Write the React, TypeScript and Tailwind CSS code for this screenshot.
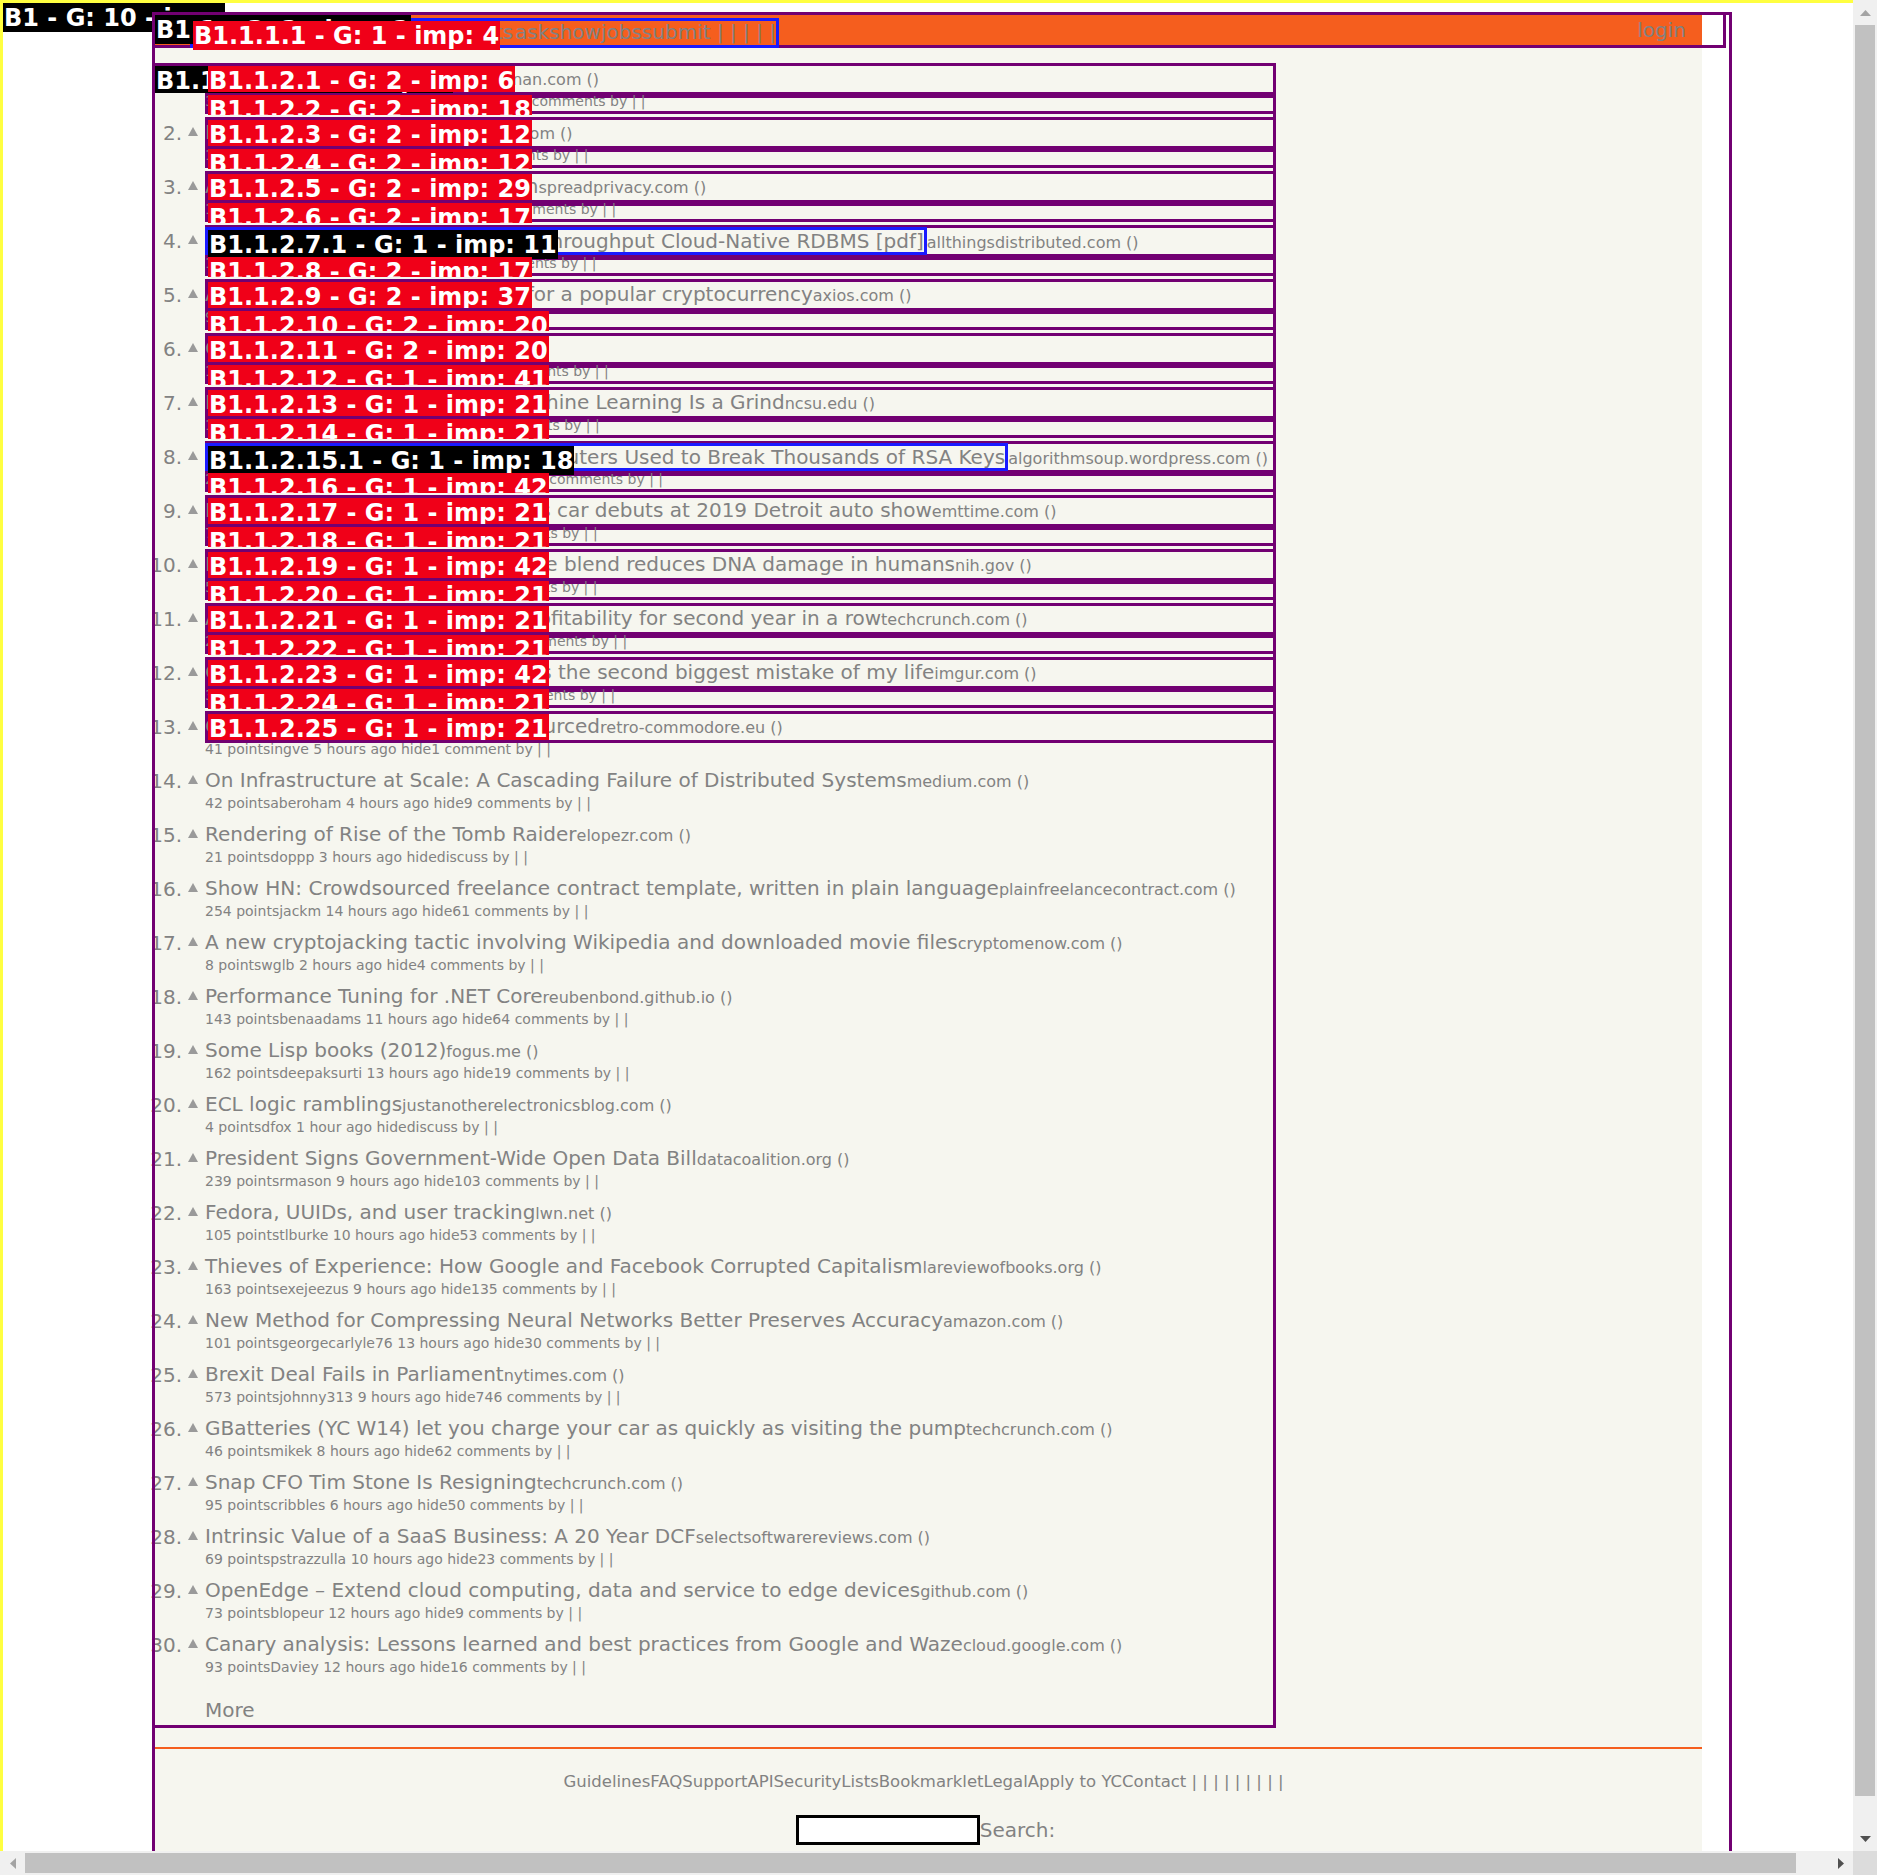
import React from 'react';

type Story = [string, string, string];

const stories: Story[] = [
  ['The Rise of Worse Is Better', 'brennan.com', '361 pointsclumsysmurf 12 hours ago hide106 comments by | |'],
  ['Rust 2019: Think Bigger', 'cameron.com', '112 pointsjseliger 7 hours ago hide45 comments by | |'],
  ['Assessing Google Personalization', 'spreadprivacy.com', '187 pointsmpweiher 10 hours ago hide67 comments by | |'],
  ['Amazon Aurora: Built for a Huge Throughput Cloud-Native RDBMS [pdf]', 'allthingsdistributed.com', '136 pointsrbanffy 11 hours ago hide38 comments by | |'],
  ['A 51% attack is now under way for a popular cryptocurrency', 'axios.com', '9 pointsdnetesn 1 hour ago hidediscuss by | |'],
  ['Curl 7.63.0 released', 'haxx.se', '104 pointspseudolus 8 hours ago hide27 comments by | |'],
  ['Most of the Everyday Work in Machine Learning Is a Grind', 'ncsu.edu', '150 pointsjonbaer 14 hours ago hide71 comments by | |'],
  ['The Simple Maths Behind the Computers Used to Break Thousands of RSA Keys', 'algorithmsoup.wordpress.com', '213 pointsbryanrasmussen 15 hours ago hide88 comments by | |'],
  ['Hydrogen-powered, electric sports car debuts at 2019 Detroit auto show', 'emttime.com', '76 pointswalterbell 6 hours ago hide29 comments by | |'],
  ['Fruit & vegetable juice concentrate blend reduces DNA damage in humans', 'nih.gov', '58 pointspmoriarty 9 hours ago hide31 comments by | |'],
  ['Airbnb reported it has reached profitability for second year in a row', 'techcrunch.com', '248 pointsgorpomon 16 hours ago hide134 comments by | |'],
  ['Quitting my job with Microsoft was the second biggest mistake of my life', 'imgur.com', '341 pointshardmaru 11 hours ago hide97 comments by | |'],
  ['Commodore 64 BASIC V2 open sourced', 'retro-commodore.eu', '41 pointsingve 5 hours ago hide1 comment by | |'],
  ['On Infrastructure at Scale: A Cascading Failure of Distributed Systems', 'medium.com', '42 pointsaberoham 4 hours ago hide9 comments by | |'],
  ['Rendering of Rise of the Tomb Raider', 'elopezr.com', '21 pointsdoppp 3 hours ago hidediscuss by | |'],
  ['Show HN: Crowdsourced freelance contract template, written in plain language', 'plainfreelancecontract.com', '254 pointsjackm 14 hours ago hide61 comments by | |'],
  ['A new cryptojacking tactic involving Wikipedia and downloaded movie files', 'cryptomenow.com', '8 pointswglb 2 hours ago hide4 comments by | |'],
  ['Performance Tuning for .NET Core', 'reubenbond.github.io', '143 pointsbenaadams 11 hours ago hide64 comments by | |'],
  ['Some Lisp books (2012)', 'fogus.me', '162 pointsdeepaksurti 13 hours ago hide19 comments by | |'],
  ['ECL logic ramblings', 'justanotherelectronicsblog.com', '4 pointsdfox 1 hour ago hidediscuss by | |'],
  ['President Signs Government-Wide Open Data Bill', 'datacoalition.org', '239 pointsrmason 9 hours ago hide103 comments by | |'],
  ['Fedora, UUIDs, and user tracking', 'lwn.net', '105 pointstlburke 10 hours ago hide53 comments by | |'],
  ['Thieves of Experience: How Google and Facebook Corrupted Capitalism', 'lareviewofbooks.org', '163 pointsexejeezus 9 hours ago hide135 comments by | |'],
  ['New Method for Compressing Neural Networks Better Preserves Accuracy', 'amazon.com', '101 pointsgeorgecarlyle76 13 hours ago hide30 comments by | |'],
  ['Brexit Deal Fails in Parliament', 'nytimes.com', '573 pointsjohnny313 9 hours ago hide746 comments by | |'],
  ['GBatteries (YC W14) let you charge your car as quickly as visiting the pump', 'techcrunch.com', '46 pointsmikek 8 hours ago hide62 comments by | |'],
  ['Snap CFO Tim Stone Is Resigning', 'techcrunch.com', '95 pointscribbles 6 hours ago hide50 comments by | |'],
  ['Intrinsic Value of a SaaS Business: A 20 Year DCF', 'selectsoftwarereviews.com', '69 pointspstrazzulla 10 hours ago hide23 comments by | |'],
  ['OpenEdge – Extend cloud computing, data and service to edge devices', 'github.com', '73 pointsblopeur 12 hours ago hide9 comments by | |'],
  ['Canary analysis: Lessons learned and best practices from Google and Waze', 'cloud.google.com', '93 pointsDaviey 12 hours ago hide16 comments by | |'],
];

// debug tag values per block index (B1.1.2.x): [G, imp]
const tagInfo: Record<number, [number, number]> = {
  1: [2, 6], 2: [2, 18], 3: [2, 12], 4: [2, 12], 5: [2, 29], 6: [2, 17], 8: [2, 17],
  9: [2, 37], 10: [2, 20], 11: [2, 20], 12: [1, 41], 13: [1, 21], 14: [1, 21], 16: [1, 42],
  17: [1, 21], 18: [1, 21], 19: [1, 42], 20: [1, 21], 21: [1, 21], 22: [1, 21], 23: [1, 42],
  24: [1, 21], 25: [1, 21],
};

function Tag({ text, dark, className }: { text: string; dark?: boolean; className: string }) {
  return (
    <div
      className={`absolute overflow-hidden whitespace-nowrap px-[1px] text-[24px] font-bold leading-[30px] text-white ${
        dark ? 'bg-black' : 'bg-[#f00018]'
      } ${className}`}
    >
      {text}
    </div>
  );
}

function UpArrow() {
  return (
    <svg width="10" height="9" viewBox="0 0 10 9">
      <path d="M5 0L10 9H0Z" fill="#9a9a9a" />
    </svg>
  );
}

function blockTag(i: number) {
  const [g, imp] = tagInfo[i];
  return `B1.1.2.${i} - G: ${g} - imp: ${imp}`;
}

function StoryRow({ n, story }: { n: number; story: Story }) {
  const [title, site, sub] = story;
  const boxed = n <= 13;
  const subBoxed = n <= 12;
  const ti = 2 * n - 1;
  const si = 2 * n;
  const linked = n === 4 || n === 8;

  return (
    <>
      <div className="flex h-[32px]">
        <div className="flex w-[30px] shrink-0 justify-end whitespace-nowrap text-[20px] leading-[32px]">{n}.</div>
        <div className="flex w-[23px] shrink-0 items-center pb-[4px] pl-[6px]">
          <UpArrow />
        </div>
        <div
          className={`relative flex min-w-0 flex-1 items-center whitespace-nowrap ${
            boxed ? 'shadow-[inset_0_0_0_3px_#720072]' : ''
          }`}
        >
          <div className="leading-[24px]">
            {linked ? (
              <span className="relative inline-block h-[28px] border-[3px] border-[#1a1aff] text-[20px] leading-[22px]">
                {title}
                <Tag
                  dark
                  text={`B1.1.2.${ti}.1 - G: 1 - imp: ${n === 4 ? 11 : 18}`}
                  className="left-0 top-0 z-20 h-[29px]"
                />
              </span>
            ) : (
              <span className="text-[20px]">{title}</span>
            )}
            <span className="text-[16px]">{site} ()</span>
          </div>
          {boxed && !linked && <Tag text={blockTag(ti)} className="left-[3px] top-[3px] z-20 h-[26px]" />}
        </div>
      </div>
      <div className="flex h-[19px]">
        <div className="w-[53px] shrink-0" />
        <div className={`relative min-w-0 flex-1 ${subBoxed ? 'shadow-[inset_0_0_0_3px_#720072]' : ''}`}>
          <div className="-mt-[2px] whitespace-nowrap text-[14px] leading-[16px]">{sub}</div>
          {subBoxed && <Tag text={blockTag(si)} className="left-[3px] top-0 z-20 h-[20px]" />}
        </div>
      </div>
      <div className="h-[3px]" />
    </>
  );
}

function Tri({ dir, dark }: { dir: 'up' | 'down' | 'left' | 'right'; dark?: boolean }) {
  const fill = dark ? '#505050' : '#a3a3a3';
  if (dir === 'up' || dir === 'down') {
    return (
      <svg width="11" height="6" viewBox="0 0 11 6">
        <path d={dir === 'up' ? 'M5.5 0L11 6H0Z' : 'M0 0H11L5.5 6Z'} fill={fill} />
      </svg>
    );
  }
  return (
    <svg width="6" height="11" viewBox="0 0 6 11">
      <path d={dir === 'left' ? 'M0 5.5L6 0V11Z' : 'M0 0L6 5.5L0 11Z'} fill={fill} />
    </svg>
  );
}

export default function App() {
  return (
    <div className="grid h-[1875px] w-[1877px] grid-cols-[1853px_24px] grid-rows-[1851px_24px] overflow-hidden bg-white font-['DejaVu_Sans',sans-serif] text-[#828282]">
      {/* page viewport */}
      <div className="overflow-hidden bg-white">
        <div className="relative min-h-full border-l-[3px] border-t-[3px] border-[#ffff40]">
          <Tag dark text="B1 - G: 10 - imp: 1" className="left-0 top-0 h-[29px] w-[222px]" />

          <div className="relative ml-[149px] mt-[9px] w-[1580px] border-[3px] border-[#720072] bg-white">
            <Tag dark text="B1.1 - G: 2 - imp: 3" className="left-0 top-0 z-10 h-[29px]" />

            {/* header */}
            <div className="-ml-[3px] -mt-[3px] h-[36px] w-[1574px] border-[3px] border-[#720072] bg-white">
              <div className="flex h-[30px] w-[1547px] items-start bg-[#f55e1e]">
                <div className="relative ml-[35px] mt-[3px] flex h-[30px] border-[3px] border-[#1a1aff] text-[20px] leading-[22px]">
                  <span className="w-[322px] shrink-0 overflow-hidden whitespace-nowrap">Hacker Newsnewpastcomments</span>
                  <span className="whitespace-nowrap">askshowjobssubmit | | | | |</span>
                  <Tag text="B1.1.1.1 - G: 1 - imp: 4" className="left-0 top-0 z-20 h-[29px]" />
                </div>
                <span className="ml-auto self-center pr-[16px] text-[20px] leading-[24px]">login</span>
              </div>
            </div>

            {/* main */}
            <div className="w-[1547px] bg-[#f6f6ef] pb-[60px] pt-[15px]">
              <div className="relative -ml-[3px] w-[1124px]">
                <div className="pointer-events-none absolute inset-0 z-10 border-[3px] border-[#720072]" />
                <Tag dark text="B1.1.2 - G: 26 - imp: 7" className="left-[3px] top-[3px] z-10 h-[27px]" />
                {stories.map((s, i) => (
                  <StoryRow key={i} n={i + 1} story={s} />
                ))}
                <div className="h-[14px]" />
                <div className="h-[27px] pl-[53px] text-[20px] leading-[27px]">More</div>
                <div className="h-[4px]" />
              </div>

              <div className="mt-[19px] h-[2px] bg-[#f55e1e]" />
              <div className="mt-[23px] whitespace-nowrap pr-[10px] text-center text-[16.5px] leading-[19px]">
                GuidelinesFAQSupportAPISecurityListsBookmarkletLegalApply to YCContact | | | | | | | | |
              </div>
              <div className="mt-[24px] flex items-center justify-center pr-[6px]">
                <div className="h-[30px] w-[184px] border-[3px] border-black bg-white" />
                <span className="text-[20px] leading-[24px]">Search:</span>
              </div>
            </div>
          </div>
        </div>
      </div>

      {/* vertical scrollbar */}
      <div className="flex flex-col bg-[#f0f0f0]">
        <div className="flex h-[25px] items-center justify-center">
          <Tri dir="up" />
        </div>
        <div className="mx-[2px] h-[1771px] bg-[#c1c1c1]" />
        <div className="flex-1" />
        <div className="flex h-[25px] items-center justify-center">
          <Tri dir="down" dark />
        </div>
      </div>

      {/* horizontal scrollbar */}
      <div className="flex bg-[#f0f0f0]">
        <div className="flex w-[25px] items-center justify-center">
          <Tri dir="left" />
        </div>
        <div className="my-[2px] w-[1771px] bg-[#c1c1c1]" />
        <div className="flex-1" />
        <div className="flex w-[25px] items-center justify-center">
          <Tri dir="right" dark />
        </div>
      </div>
      <div className="bg-[#dcdcdc]" />
    </div>
  );
}
